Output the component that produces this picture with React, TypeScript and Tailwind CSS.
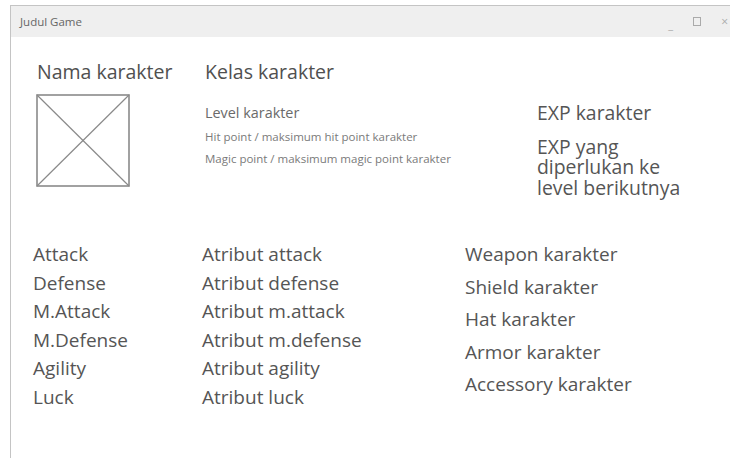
import React from "react";

const stats = ["Attack", "Defense", "M.Attack", "M.Defense", "Agility", "Luck"];
const attrs = [
  "Atribut attack",
  "Atribut defense",
  "Atribut m.attack",
  "Atribut m.defense",
  "Atribut agility",
  "Atribut luck",
];
const gear = [
  "Weapon karakter",
  "Shield karakter",
  "Hat karakter",
  "Armor karakter",
  "Accessory karakter",
];

function Portrait() {
  return (
    <svg width="94" height="93" viewBox="0 0 94 93" className="block">
      <rect x="1" y="1" width="92" height="91" fill="none" stroke="#8a8a8a" strokeWidth="1.6" />
      <line x1="1" y1="1" x2="93" y2="92" stroke="#8a8a8a" strokeWidth="1.2" />
      <line x1="93" y1="1" x2="1" y2="92" stroke="#8a8a8a" strokeWidth="1.2" />
    </svg>
  );
}

export default function App() {
  return (
    <div
      className="w-[730px] h-[458px] bg-white overflow-hidden pt-[5px] pl-[10px]"
      style={{ fontFamily: '"Open Sans", "Noto Sans", sans-serif' }}
    >
      <div className="h-full w-[720px] flex flex-col border-t border-l border-[#c4c4c4] bg-white">
        {/* title bar */}
        <div className="h-[31px] shrink-0 bg-[#efefef] flex items-center pl-[9px] pr-[2px]">
          <span className="text-[11.5px] text-[#666]">Judul Game</span>
          <div className="ml-auto flex items-center gap-[20px] text-[#aaa]">
            <span className="text-[11px] leading-none mt-[6px]">_</span>
            <span className="w-[8px] h-[9px] border border-[#aaa]" />
            <span className="text-[12px] leading-none">×</span>
          </div>
        </div>

        {/* character header */}
        <div className="flex pt-[22px] pl-[26px] text-[#555]">
          <div className="w-[168px] flex flex-col">
            <span className="text-[19.5px] leading-[26px] text-[#505050]">Nama karakter</span>
            <div className="mt-[9px] ml-[-1px]">
              <Portrait />
            </div>
          </div>
          <div className="w-[332px] flex flex-col">
            <span className="text-[19.5px] leading-[26px] text-[#505050]">Kelas karakter</span>
            <span className="mt-[19px] text-[14.4px] leading-[18px] text-[#6a6a6a]">Level karakter</span>
            <span className="mt-[7px] text-[11.5px] leading-[16px] text-[#7a7a7a]">
              Hit point / maksimum hit point karakter
            </span>
            <span className="mt-[6px] text-[11.5px] leading-[16px] text-[#7a7a7a]">
              Magic point / maksimum magic point karakter
            </span>
          </div>
          <div className="flex flex-col pt-[44px] text-[19.4px] leading-[20.5px] text-[#555]">
            <span>EXP karakter</span>
            <span className="mt-[13px]">EXP yang</span>
            <span>diperlukan ke</span>
            <span>level berikutnya</span>
          </div>
        </div>

        {/* stats and equipment */}
        <div className="flex pt-[42px] pl-[22px] text-[19px] text-[#555]">
          <div className="w-[169px] flex flex-col leading-[28.6px]">
            {stats.map((s) => (
              <span key={s}>{s}</span>
            ))}
          </div>
          <div className="w-[263px] flex flex-col leading-[28.6px]">
            {attrs.map((s) => (
              <span key={s}>{s}</span>
            ))}
          </div>
          <div className="flex flex-col leading-[32.5px] mt-[-2px]">
            {gear.map((s) => (
              <span key={s}>{s}</span>
            ))}
          </div>
        </div>
      </div>
    </div>
  );
}
